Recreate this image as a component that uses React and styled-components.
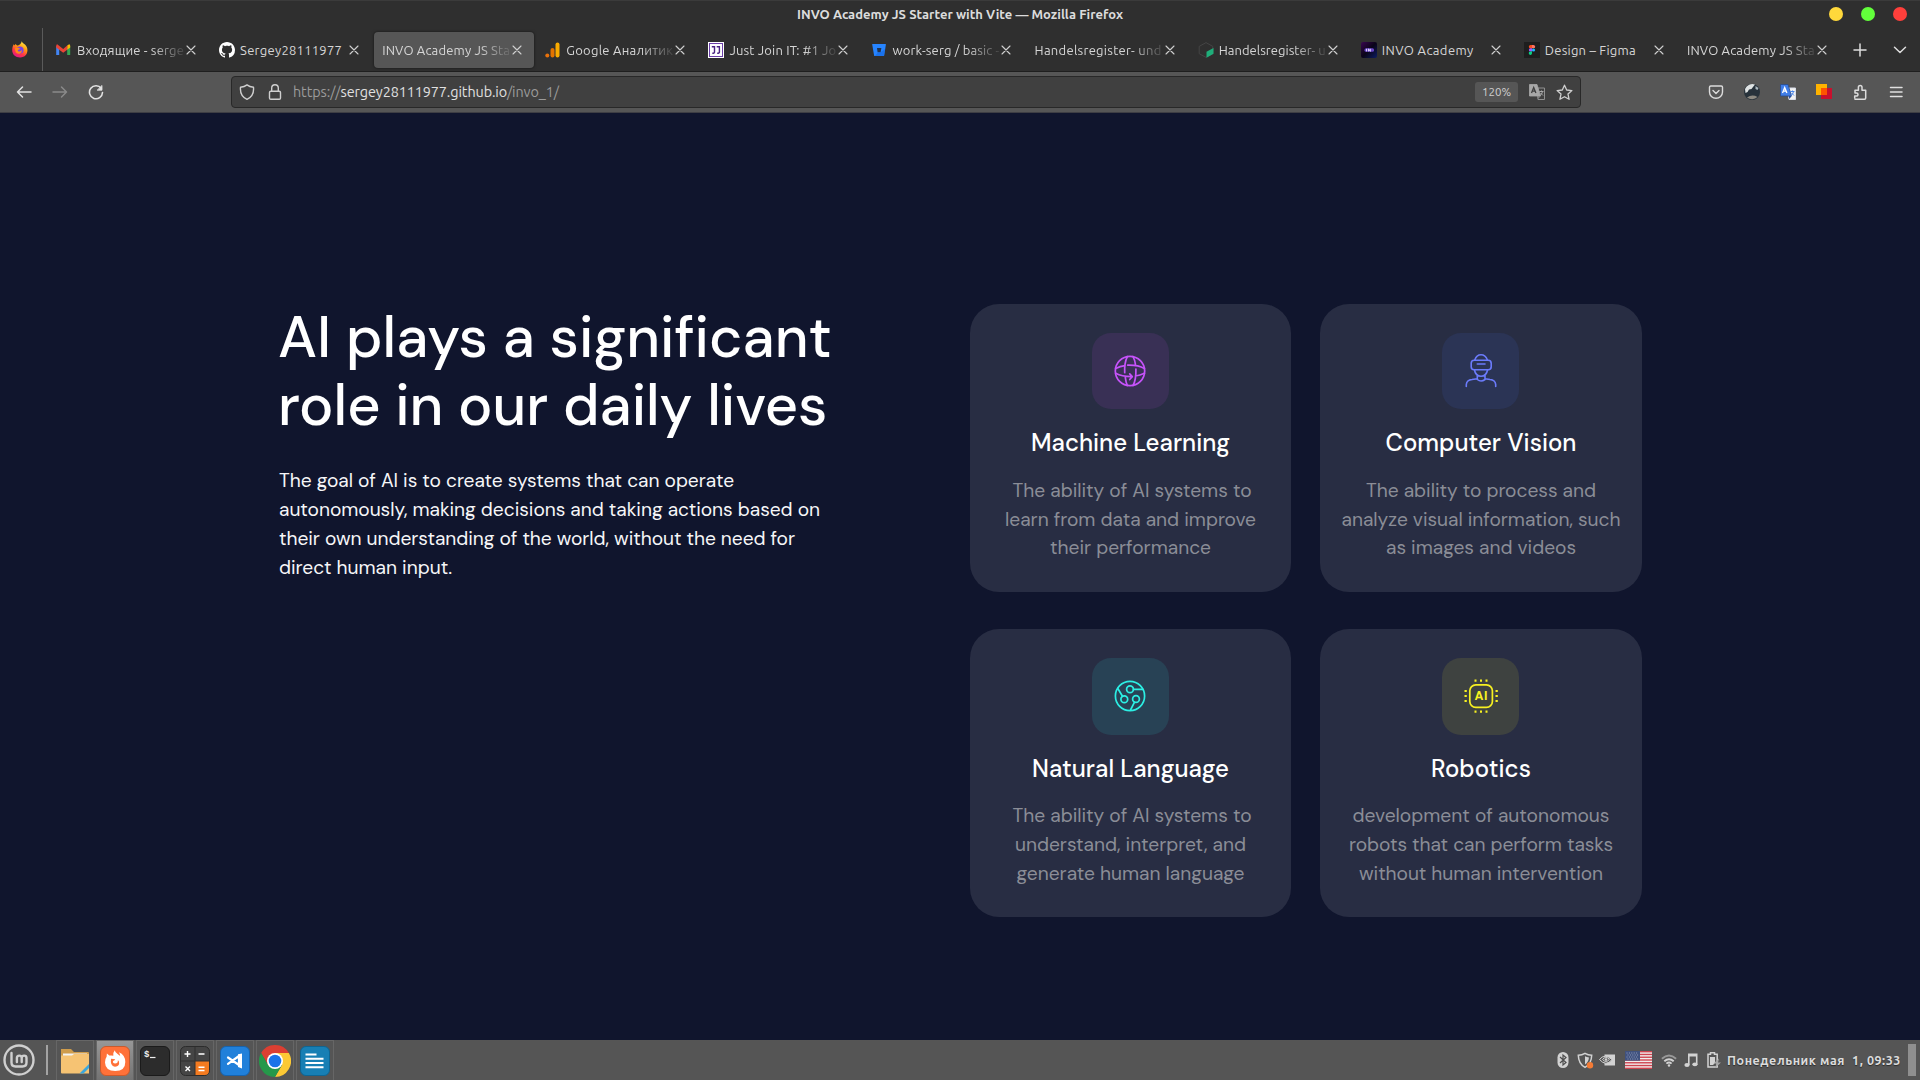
import React, { useLayoutEffect, useRef, useState } from "react";
import styled, { createGlobalStyle, css } from "styled-components";

const chromeFont = `Ubuntu, "Noto Sans", "Open Sans", sans-serif`;
const pageFont = `"DM Sans", Lato, "Open Sans", sans-serif`;

const GlobalStyle = createGlobalStyle`
  * { box-sizing: border-box; }
  body { margin: 0; background: #10152d; overflow: hidden; }
  svg { display: block; flex: none; }
`;

/* Text whose tracking is adjusted so that it spans a set measure */
const Measure = styled.span`
  display: inline-block;
  white-space: pre;
`;

function Fit({ width, children }) {
  const ref = useRef(null);
  const [spacing, setSpacing] = useState(0);
  useLayoutEffect(() => {
    const natural = ref.current.getBoundingClientRect().width;
    setSpacing((width - natural) / ref.current.textContent.length);
  }, [width]);
  return (
    <Measure ref={ref} style={{ letterSpacing: `${spacing}px` }}>
      {children}
    </Measure>
  );
}

const Desktop = styled.div`
  width: 1920px;
  height: 1080px;
  display: flex;
  flex-direction: column;
  background: #10152d;
`;

/* ---------- window title ---------- */
const TitleBar = styled.header`
  height: 28px;
  flex: none;
  background: #2f2f2f;
  border-top: 1px solid #3b3b3b;
  display: grid;
  grid-template-columns: 1fr auto 1fr;
  align-items: center;
  font: 600 13px/26px ${chromeFont};
  color: #dcdcdc;
`;
const WindowButtons = styled.div`
  grid-column: 3;
  display: flex;
  justify-content: flex-end;
  gap: 18px;
  padding: 0 13px 1px 0;
`;
const WindowTitle = styled.div`
  grid-column: 2;
  padding-bottom: 1px;
`;
const Dot = styled.i`
  width: 14px;
  height: 14px;
  border-radius: 50%;
  background: ${(p) => p.$color};
`;

/* ---------- tabs ---------- */
const TabStrip = styled.nav`
  height: 44px;
  flex: none;
  background: #2f2f2f;
  border-bottom: 1px solid #1f1f1f;
  display: flex;
  font: 400 13px/20px ${chromeFont};
  color: #d6d6d6;
`;
const PinnedTab = styled.div`
  width: 43px;
  margin-right: 5px;
  border-right: 1px solid #5a5a5a;
  display: flex;
  align-items: center;
  padding: 0 0 0 12px;
`;
const Tab = styled.div`
  width: 160px;
  height: 36px;
  margin: 4px 3.1px 0 0;
  padding: 0 11px 0 8px;
  border-radius: 4px;
  display: flex;
  align-items: center;
  ${(p) =>
    p.$active &&
    css`
      background: #565656;
      box-shadow: 0 0 3px rgba(0, 0, 0, 0.6);
    `}
`;
const TabIcon = styled.span`
  width: 16px;
  margin-right: 5px;
`;
const TabLabel = styled.span`
  flex: 1;
  min-width: 0;
  white-space: nowrap;
  ${(p) =>
    p.$fade &&
    css`
      mask-image: linear-gradient(to right, #000 calc(100% - 32px), rgba(0, 0, 0, 0.12));
    `}
`;
const TabClose = styled.span`
  width: 14px;
  margin-right: -1px;
`;
const TabTools = styled.div`
  display: flex;
  align-items: center;
  gap: 26px;
  padding: 0 0 0 11px;
`;

/* ---------- toolbar ---------- */
const Toolbar = styled.div`
  height: 41px;
  flex: none;
  background: #565656;
  border-bottom: 1px solid #3e3e44;
  display: flex;
  align-items: center;
  justify-content: space-between;
`;
const NavButtons = styled.div`
  display: flex;
  gap: 20px;
  padding-left: 16px;
  width: 231px;
`;
const UrlBar = styled.div`
  width: 1350px;
  height: 32px;
  background: #404040;
  border: 1px solid #282828;
  border-radius: 4px;
  display: flex;
  align-items: center;
  padding: 0 7px 0 7px;
`;
const UrlIcons = styled.div`
  display: flex;
  gap: 12px;
  margin-right: 10px;
`;
const Address = styled.div`
  flex: 1;
  font: 400 14.4px/22px ${chromeFont};
  color: #9b9b9b;
  b { font-weight: 400; color: #e0e0e0; }
`;
const ZoomBadge = styled.div`
  width: 43px;
  height: 20px;
  margin-right: 11px;
  border-radius: 3px;
  background: #565656;
  color: #d0d0d0;
  font: 400 11.5px/20px ${chromeFont};
  text-align: center;
`;
const StarSlot = styled.span`
  margin-left: 11px;
`;
const Extensions = styled.div`
  width: 339px;
  display: flex;
  justify-content: flex-end;
  gap: 20px;
  padding-right: 16px;
`;

/* ---------- page ---------- */
const Page = styled.main`
  flex: 1;
  display: flex;
  align-items: flex-start;
  gap: 99px;
  padding: 190.8px 0 0 279px;
  font-family: ${pageFont};
  font-optical-sizing: none;
`;
const Intro = styled.section`
  width: 592px;
  padding-top: 0.2px;
`;
const Heading = styled.h1`
  margin: 0 0 0 -1px;
  color: #fff;
  font-size: 57.6px;
  font-weight: 500;
  line-height: 68px;
`;
const Lead = styled.p`
  margin: 26px 0 0;
  color: #f6f6f8;
  font-size: 19.2px;
  line-height: 29px;
`;
const Cards = styled.section`
  display: grid;
  grid-template-columns: 321px 322px;
  gap: 37.2px 29px;
`;
const Card = styled.article`
  height: 288px;
  padding-top: 28.8px;
  border-radius: 29px;
  background: #282d43;
  display: flex;
  flex-direction: column;
  align-items: center;
  text-align: center;
`;
const IconTile = styled.div`
  width: 77px;
  height: 76.8px;
  margin-right: 1px;
  border-radius: 19px;
  background: ${(p) => p.$bg};
  color: ${(p) => p.$fg};
  display: flex;
  align-items: center;
  justify-content: center;
`;
const CardTitle = styled.h2`
  margin: 18px 0 0;
  color: #fff;
  font-size: 24px;
  font-weight: 500;
  line-height: 32px;
`;
const CardText = styled.p`
  margin: 17.4px 0 0;
  color: #8b8d97;
  font-size: 19.2px;
  line-height: 28.8px;
`;
const Line = styled.span`
  display: block;
  padding-left: ${(p) => p.$indent || 0}px;
`;

/* ---------- desktop panel ---------- */
const Panel = styled.footer`
  height: 40px;
  flex: none;
  background: #555;
  display: flex;
  align-items: center;
  padding: 0 4px 0 3px;
`;
const PanelDivider = styled.i`
  width: 2px;
  height: 30px;
  margin: 0 8px 0 11px;
  background: #a3a3a3;
`;
const Launcher = styled.div`
  width: 38px;
  height: 40px;
  margin-right: 2px;
  border: 1px solid #666;
  border-bottom: 0;
  display: flex;
  align-items: center;
  justify-content: center;
  background: ${(p) => (p.$active ? "linear-gradient(#979797, #737373)" : "transparent")};
`;
const Tray = styled.div`
  margin-left: auto;
  display: flex;
  align-items: center;
  color: #d2d2d2;
`;
const TraySlot = styled.span`
  width: ${(p) => p.$w}px;
  display: flex;
  justify-content: center;
`;
const Clock = styled.div`
  width: 183px;
  padding: 0 0 0 2px;
  font: 700 12.5px/20px ${chromeFont};
  color: #dcdcdc;
  text-shadow: 0 1px 1px rgba(0, 0, 0, 0.5);
`;
const ShowDesktop = styled.i`
  width: 8px;
  height: 32px;
  background: #8f8f8f;
`;

/* ---------- drawings ---------- */
const Svg = ({ s = 16, w, h, vb, children, sw = 1.4, ...rest }) => (
  <svg
    width={w || s}
    height={h || s}
    viewBox={vb || `0 0 ${w || s} ${h || s}`}
    fill="none"
    stroke="currentColor"
    strokeWidth={sw}
    strokeLinecap="round"
    strokeLinejoin="round"
    {...rest}
  >
    {children}
  </svg>
);

const Close = () => (
  <Svg s={14} sw={1.1} stroke="#d0d0d0"><path d="M3 3l8 8M11 3l-8 8" /></Svg>
);

const FirefoxIcon = () => (
  <svg width="16" height="17" viewBox="0 0 16 17">
    <defs>
      <linearGradient id="ff" x1="0.8" y1="0" x2="0.3" y2="1">
        <stop offset="0" stopColor="#fff44f" />
        <stop offset="0.4" stopColor="#ff980e" />
        <stop offset="0.7" stopColor="#ff3647" />
        <stop offset="1" stopColor="#e31587" />
      </linearGradient>
    </defs>
    <path d="M9.7.3C10.6 2.5 13 3 14.5 5.4c2.4 4.5.2 11-6.3 11C3.700 16.500.2 13.600.200 8.900c0-2 .7-4.400 1.500-5.700l1 1.300.700-1.500 1.800 1.500C6.800 4.400 8.900 3.700 9.700.3z" fill="url(#ff)" />
    <circle cx="8" cy="9" r="3.600" fill="#7542e5" />
    <path d="M3 7.300c2-1 4-.5 5.400.7-1.500.2-2.200.9-2.700 1.700 1.500 1.600 3.600.7 3.900-.9.700 1.500-.2 4-3 4S3 10 3 7.300z" fill="#ff8a16" />
  </svg>
);
const GmailIcon = () => (
  <svg width="16" height="16" viewBox="0.8 0 16 16">
    <path d="M1 4v9h3V6z" fill="#4285f4" />
    <path d="M15 4v9h-3V6z" fill="#34a853" />
    <path d="M12 3.500L14 2.300q1 .2 1 1.700v1.600l-3 2.200z" fill="#fbbc04" />
    <path d="M1 4q0-1.500 1-1.700L8 7l4-3.400v4.200l-4 3-7-5.200z" fill="#ea4335" />
  </svg>
);
const GithubIcon = () => (
  <svg width="16" height="16" viewBox="0 0 16 16">
    <path fill="#fff" d="M8 0C3.580 0 0 3.580 0 8c0 3.540 2.290 6.530 5.470 7.590.4.070.55-.17.55-.38 0-.19-.01-.82-.01-1.490-2.010.37-2.530-.49-2.690-.94-.09-.23-.48-.94-.82-1.130-.28-.15-.68-.52-.01-.53.63-.01 1.080.58 1.230.82.72 1.210 1.870.87 2.330.66.070-.52.28-.87.51-1.070-1.780-.2-3.640-.89-3.640-3.950 0-.87.31-1.590.82-2.150-.08-.2-.36-1.020.08-2.120 0 0 .67-.21 2.200.82.64-.18 1.320-.27 2-.27s1.360.09 2 .27c1.530-1.040 2.200-.82 2.200-.82.44 1.100.16 1.920.08 2.120.51.56.82 1.270.82 2.150 0 3.070-1.870 3.750-3.650 3.950.29.25.54.73.54 1.480 0 1.070-.01 1.930-.01 2.200 0 .21.15.46.55.38A8.010 8.010 0 0016 8c0-4.420-3.580-8-8-8z" />
  </svg>
);
const AnalyticsIcon = () => (
  <svg width="16" height="16" viewBox="0 0 16 16">
    <rect x="10.500" y="0.500" width="4" height="15" rx="2" fill="#f9ab00" />
    <rect x="5.500" y="6" width="4" height="9.500" rx="2" fill="#e37400" />
    <circle cx="2.300" cy="13.500" r="2" fill="#e8710a" />
  </svg>
);
const JoinIcon = () => (
  <svg width="16" height="16" viewBox="0 0 16 16">
    <rect width="16" height="16" fill="#fff" />
    <rect x="1.500" y="1.500" width="13" height="13" fill="#fff" stroke="#6b3fa8" />
    <path d="M3.800 4.700h2.700v5.300q0 1.300-2.200 1.300M8.700 4.700h2.700v5.300q0 1.300-2.200 1.300" fill="none" stroke="#4a2483" strokeWidth="1.400" />
  </svg>
);
const BitbucketIcon = () => (
  <svg width="16" height="16" viewBox="0 0 16 16">
    <path d="M1.500 2h13q.5 0 .4.500l-1.700 11q-.1.500-.6.500H3.700q-.5 0-.6-.5L1.200 2.500Q1.100 2 1.500 2z" fill="#2684ff" />
    <path d="M6 6h4.400l-.8 4.200H6.600z" fill="#20324e" />
    <path d="M10 10l4-3-1 6.500q-.1.500-.6.500H4l3-3.800z" fill="#1266e0" opacity=".6" />
  </svg>
);
const HexIcon = () => (
  <svg width="16" height="16" viewBox="0 0 16 16">
    <path d="M8 .6l6.800 3.800v7.300L8 15.400 1.200 11.700V4.400z" fill="none" stroke="#454545" />
    <path d="M8.500 9.700L15.500 6v5.800l-7 3.900z" fill="#1fae7a" />
  </svg>
);
const InvoIcon = () => (
  <svg width="16" height="16" viewBox="0 0 16 16">
    <defs>
      <linearGradient id="invo" x1="0" y1="0" x2="1" y2="1">
        <stop offset="0" stopColor="#3a0650" />
        <stop offset=".5" stopColor="#0a0418" />
        <stop offset="1" stopColor="#0c1c63" />
      </linearGradient>
    </defs>
    <rect width="16" height="16" rx="2" fill="url(#invo)" />
    <rect x="3.500" y="6.200" width="9.500" height="3.600" rx="1.500" fill="#6a47c8" />
    <path d="M5.500 6.800v2.600M7.500 9.400V6.800l1.800 2.600V6.800" stroke="#e6dcff" strokeWidth=".9" fill="none" />
  </svg>
);
const FigmaIcon = () => (
  <svg width="16" height="16" viewBox="0 0 16 16">
    <rect width="16" height="16" fill="#1e1e1e" />
    <path d="M8 3H6.500a1.600 1.600 0 000 3.300H8z" fill="#f24e1e" />
    <path d="M8 3h1.500a1.600 1.600 0 010 3.300H8z" fill="#ff7262" />
    <path d="M8 6.300H6.500a1.600 1.600 0 000 3.300H8z" fill="#a259ff" />
    <circle cx="9.500" cy="8" r="1.600" fill="#1abcfe" />
    <path d="M8 9.600H6.500A1.650 1.650 0 108 11.300z" fill="#0acf83" />
  </svg>
);

const GlobeIcon = () => (
  <Svg s={32} sw={1.7}>
    <circle cx="16" cy="16" r="14.700" />
    <path d="M1.700 13.500Q6 11.200 11 10.600M13.700 10.200Q24 9.900 30.400 13.500M1.700 18.300Q8 21.700 18 21.600M15.700 18.800l2.600 2.800-2.600 2.900M21.500 21Q26 20.300 30.400 18.300M13.300 1.600Q10.200 8 10.700 17.700M11.300 22.400Q12 28 13.300 30.500M19 1.600Q21 5 21.600 10.200M21.900 14Q22.200 25 19 30.500" />
  </Svg>
);
const VisionIcon = () => (
  <Svg w={32} h={34} vb="0 -1 32 34" sw={1.6}>
    <path d="M9.700 5.200Q11.500 -.2 16 -.2T22.500 5.200M12.300 9h7.700M9.500 15Q10.500 21 16 21.300 21.500 21 22.500 15M12.300 20.300v4.200Q16 27.500 20 24.500v-4.200M1.300 31.500V29.500Q1.700 25 7 24.500L12.300 23.800M30.700 31.500V29.500Q30.300 25 25 24.500L20 23.800" />
    <rect x="6.200" y="5.200" width="20" height="9.600" rx="3" />
  </Svg>
);
const LanguageIcon = () => (
  <Svg s={32} sw={1.7}>
    <circle cx="16" cy="16" r="14.600" />
    <circle cx="16" cy="9.300" r="3.400" />
    <circle cx="10.300" cy="19.300" r="3.400" />
    <circle cx="22" cy="19" r="3.400" />
    <path d="M19.500 9.300H29M8.500 16.300L3.800 8.500M20.500 22.200L16.500 30" />
  </Svg>
);
const ChipIcon = () => (
  <Svg s={34} sw={1.7} vb="-1 -1 34 34">
    <rect x="4.800" y="4.800" width="22.600" height="22.600" rx="6" />
    <g strokeWidth="2" strokeLinecap="butt">
      <path d="M10.500 -.5v2.300M16 -.5v2.300M21.500 -.5v2.300M10.500 30.500v2.300M16 30.500v2.300M21.500 30.500v2.300M-.5 11h2.300M-.5 16h2.300M-.5 21h2.300M30.500 11h2.300M30.500 16h2.300M30.500 21h2.300" />
    </g>
    <text x="16.400" y="20.400" textAnchor="middle" fontFamily="DM Sans, Lato, sans-serif" fontWeight="800" fontSize="12.500" fill="currentColor" stroke="none" letterSpacing=".8">AI</text>
  </Svg>
);

const TranslateIcon = ({ color }) => (
  <svg width="16" height="16" viewBox="0.500 0.500 16 16">
    <path d="M8 4.500h8v11.500H9.500z" fill={color ? "#f2f2f2" : "none"} stroke={color ? "#d8dde8" : "#8f8f8f"} />
    <path d="M1 1h7.500l3.500 11.500H1z" fill={color ? "#3f7de8" : "#a8a8a8"} stroke={color ? "#2a4b8c" : "#a8a8a8"} strokeWidth=".8" />
    <path d="M9 12.500h3L10 15.500z" fill={color ? "#274a9a" : "#858585"} />
    <path d="M3 9.500L5.200 4l2.200 5.500M3.800 7.700h2.800" fill="none" stroke={color ? "#fff" : "#404040"} strokeWidth="1.300" />
    <path d="M10.800 8h4.200M13 7v1M14 8q-.5 3-2.500 4M12 9.500l2.500 2.500" fill="none" stroke={color ? "#4a86ea" : "#a8a8a8"} />
  </svg>
);

const tabs = [
  { icon: <GmailIcon />, label: "Входящие - serge", width: 107, fade: true },
  { icon: <GithubIcon />, label: "Sergey28111977", width: 102 },
  { label: "INVO Academy JS Sta", width: 128, fade: true, active: true },
  { icon: <AnalyticsIcon />, label: "Google Аналитик", width: 107, fade: true },
  { icon: <JoinIcon />, label: "Just Join IT: #1 Jo", width: 107, fade: true },
  { icon: <BitbucketIcon />, label: "work-serg / basic -", width: 107, fade: true },
  { label: "Handelsregister- und", width: 127, fade: true },
  { icon: <HexIcon />, label: "Handelsregister- u", width: 107, fade: true },
  { icon: <InvoIcon />, label: "INVO Academy", width: 92 },
  { icon: <FigmaIcon />, label: "Design – Figma", width: 91 },
  { label: "INVO Academy JS Sta", width: 128, fade: true },
];

const cards = [
  {
    title: ["Machine Learning", 199], bg: "#393055", fg: "#c653fa", icon: <GlobeIcon />,
    lines: [["The ability of AI systems to", 239, 3], ["learn from data and improve", 251], ["their performance", 161]],
  },
  {
    title: ["Computer Vision", 191], bg: "#2b3455", fg: "#6b7bfb", icon: <VisionIcon />,
    lines: [["The ability to process and", 230], ["analyze visual information, such", 279], ["as images and videos", 190]],
  },
  {
    title: ["Natural Language", 197], bg: "#284255", fg: "#2cefe4", icon: <LanguageIcon />,
    lines: [["The ability of AI systems to", 239, 3], ["understand, interpret, and", 231], ["generate human language", 228]],
  },
  {
    title: ["Robotics", 100], bg: "#3e4240", fg: "#f7f121", icon: <ChipIcon />,
    lines: [["development of autonomous", 257], ["robots that can perform tasks", 264], ["without human intervention", 244]],
  },
];

/* ---------- launchers ---------- */
const MintLogo = () => (
  <Svg s={32} sw={2.4} stroke="#cfcfcf">
    <circle cx="16" cy="16" r="14.500" />
    <path d="M8.500 9v9.500q0 4 4 4h7q4 0 4-4V14q0-2.400-2.400-2.400T18.700 14v4M18.700 14q0-2.400-2.400-2.400T13.900 14v4" />
  </Svg>
);
const FolderIcon = () => (
  <svg width="30" height="30" viewBox="0 0 30 30">
    <path d="M1 3h10l3 3h14q1 0 1 1v19H1z" fill="#cf9c4c" />
    <path d="M3 7.500h24V12H3z" fill="#f3f3f3" />
    <path d="M1 9.500h11l2-1.500h15v19.500H2q-1 0-1-1z" fill="#f6c373" />
    <path d="M29 18v4l-5.500 5.500h-4z" fill="#3ba7dd" />
  </svg>
);
const FoxIcon = () => (
  <svg width="30" height="30" viewBox="0 0 30 30">
    <rect x=".5" y=".5" width="29" height="29" rx="5.500" fill="#ff7139" stroke="#c95a2d" />
    <path d="M14.800 4.200q.2 2.300 2.800 3.800l2.600 2q-.2-2-1.400-3.700 6.500 2.700 6.500 9.700 0 9-10 9T5 16.500q0-3.600 1.600-5.700L6.900 7.600l2.400 2q2.800-.5 4 .2Q12.700 6.800 14.800 4.200z" fill="#fff" />
    <path d="M11 12.700l4.200.6q-.3 1.300-2.100 1.600-.7 2.400 2 2.600 3 0 2.800-3.500 1.700 1.600 1.200 4-1 2.800-4.200 2.800-5 -.7-3.900-8.100z" fill="#ff7139" />
  </svg>
);
const TerminalIcon = () => (
  <svg width="30" height="30" viewBox="0 0 30 30">
    <rect x=".5" y=".5" width="29" height="29" rx="5.500" fill="#2c2c2c" stroke="#1b1b1b" />
    <text x="4" y="10.500" fontFamily="Liberation Mono, monospace" fontSize="9" fontWeight="700" fill="#eee">$</text>
    <path d="M10 11.500h5.500" stroke="#eee" strokeWidth="1.200" />
  </svg>
);
const CalcIcon = () => (
  <svg width="30" height="30" viewBox="0 0 30 30">
    <rect x=".5" y=".5" width="29" height="29" rx="5" fill="#454545" stroke="#2c2c2c" />
    <path d="M15 15h14v9.500q0 4.500-4.500 4.500H15z" fill="#f47b20" />
    <path d="M15 1v28M1 15h28" stroke="#303030" />
    <path d="M4.500 8h6M7.500 5v6M18.500 8h6M5.500 20.500l4.500 4.500M10 20.500L5.500 25M18.500 21.200h6M18.500 24.500h6" stroke="#fff" strokeWidth="1.400" />
  </svg>
);
const CodeIcon = () => (
  <svg width="30" height="30" viewBox="0 0 30 30">
    <rect x=".5" y=".5" width="29" height="29" rx="5.500" fill="#2080da" stroke="#1763ad" />
    <path d="M8 11.500L19 19V10L8 17.800" fill="none" stroke="#fff" strokeWidth="2.200" strokeLinejoin="round" strokeLinecap="round" />
    <path d="M18 8.200l4-.7v15l-4-1.500z" fill="#fff" />
  </svg>
);
const ChromeIcon = () => (
  <svg width="32" height="32" viewBox="0 0 32 32">
    <path d="M16 8h13.860A16 16 0 0116 32l6.900-12z" fill="#fcc934" />
    <path d="M2.140 8A16 16 0 0129.860 8H16l-6.900 12z" fill="#db3f32" />
    <path d="M2.140 8l6.960 12L22.900 20 16 32A16 16 0 012.140 8z" fill="#25984a" />
    <circle cx="16" cy="16" r="8" fill="#fff" />
    <circle cx="16" cy="16" r="6.300" fill="#1a73e8" />
  </svg>
);
const WriterIcon = () => (
  <svg width="30" height="30" viewBox="0 0 30 30">
    <rect x=".5" y=".5" width="29" height="29" rx="5.500" fill="#177fb4" stroke="#0f6592" />
    <path d="M5.500 8.500h11M5.500 12.700h18M5.500 17h18M5.500 21.300h18" stroke="#fff" strokeWidth="2" />
  </svg>
);

const launchers = [
  { id: "files", icon: <FolderIcon /> },
  { id: "firefox", icon: <FoxIcon />, active: true },
  { id: "terminal", icon: <TerminalIcon /> },
  { id: "calculator", icon: <CalcIcon /> },
  { id: "code", icon: <CodeIcon /> },
  { id: "chrome", icon: <ChromeIcon /> },
  { id: "writer", icon: <WriterIcon /> },
];

const FlagIcon = () => (
  <svg width="27" height="18" viewBox="0 0 27 18">
    <rect width="27" height="18" fill="#f0eded" />
    {[0, 1, 2, 3, 4, 5, 6].map((i) => (
      <rect key={i} y={i * 2.77} width="27" height="1.385" fill="#cf4450" />
    ))}
    <rect width="15" height="9.700" fill="#40527f" />
    <path d="M1.500 2h12M2.500 4h11M1.500 6h12M2.500 8h11" stroke="#a9b3cc" strokeWidth=".8" strokeDasharray="1 1.400" />
  </svg>
);

export default function App() {
  return (
    <Desktop>
      <GlobalStyle />
      <TitleBar>
        <WindowTitle><Fit width={326}>INVO Academy JS Starter with Vite — Mozilla Firefox</Fit></WindowTitle>
        <WindowButtons>
          <Dot $color="#ffd83b" />
          <Dot $color="#62ff3b" />
          <Dot $color="#ff3f3b" />
        </WindowButtons>
      </TitleBar>

      <TabStrip>
        <PinnedTab><FirefoxIcon /></PinnedTab>
        {tabs.map((t, i) => (
          <Tab key={i} $active={t.active}>
            {t.icon && <TabIcon>{t.icon}</TabIcon>}
            <TabLabel $fade={t.fade}><Fit width={t.width}>{t.label}</Fit></TabLabel>
            <TabClose><Close /></TabClose>
          </Tab>
        ))}
        <TabTools>
          <Svg s={14} sw={1.5} stroke="#dedede"><path d="M7 1v12M1 7h12" /></Svg>
          <Svg s={14} sw={1.5} stroke="#dedede"><path d="M1.500 4.300L7 9.500l5.500-5.200" /></Svg>
        </TabTools>
      </TabStrip>

      <Toolbar>
        <NavButtons>
          <Svg sw={1.5} stroke="#e2e2e2"><path d="M1.500 8h13.500M6.500 3l-5 5 5 5" /></Svg>
          <Svg sw={1.5} stroke="#8a8a8a"><path d="M1 8h13.500M9.500 3l5 5-5 5" /></Svg>
          <Svg sw={1.6} stroke="#e2e2e2"><path d="M13.300 4.500A6.500 6.500 0 1014.500 8.500" /><path d="M14 1.800v4.400H9.500z" fill="#e2e2e2" strokeWidth=".8" /></Svg>
        </NavButtons>
        <UrlBar>
          <UrlIcons>
            <Svg sw={1.4} stroke="#cfcfcf"><path d="M8 .9Q10.500 2.800 14.500 3.300 15.300 12 8 15.300.7 12 1.500 3.300 5.500 2.800 8 .9z" /></Svg>
            <Svg sw={1.4} stroke="#cfcfcf"><rect x="2.500" y="7.200" width="11" height="8" rx="1.300" /><path d="M4.700 7V4a3.300 3.300 0 016.600 0v3" /></Svg>
          </UrlIcons>
          <Address><Fit width={266}>https://<b>sergey28111977.github.io</b>/invo_1/</Fit></Address>
          <ZoomBadge>120%</ZoomBadge>
          <TranslateIcon />
          <StarSlot>
            <Svg s={17} sw={1.3} stroke="#cfcfcf"><path d="M8.500 1.200l2.200 4.800 5.200.6-3.900 3.500 1.100 5.200-4.600-2.600-4.600 2.600L5 10.100 1.100 6.600l5.200-.6z" /></Svg>
          </StarSlot>
        </UrlBar>
        <Extensions>
          <Svg sw={1.4} stroke="#dcdcdc"><path d="M2.800 2h10.400q1.300 0 1.300 1.300V8a6.500 6.300 0 01-13 0V3.300Q1.500 2 2.800 2zM5 6.500l3 2.900 3-2.900" /></Svg>
          <svg width="16" height="16" viewBox="0 0 16 16">
            <circle cx="8" cy="8" r="8" fill="#27323b" />
            <path d="M1 5a8 8 0 0110-4.500L9 3 7.500 5 5 5.500 3.500 8 1.500 9z" fill="#dfe3e3" />
            <path d="M11.500 2l3 2-1 2-2-1z" fill="#aeb9c0" />
            <path d="M3 13.500Q8 10 13.500 13A8 8 0 013 13.500z" fill="#8d8a82" />
          </svg>
          <TranslateIcon color />
          <svg width="16" height="16" viewBox="0 0 16 16">
            <rect width="11" height="11" fill="#ffb300" />
            <rect x="5" y="4" width="11" height="11" fill="#c8102e" />
            <rect x="5" y="4" width="6" height="7" fill="#ff5400" />
          </svg>
          <Svg sw={1.5} stroke="#dcdcdc"><path d="M3 15.200h9.500q1.200 0 1.200-1.200V6.300H10V3.200a1.800 1.800 0 00-3.600 0v3.100H3v2.600h1.400a1.500 1.500 0 010 3.200H2.700V14" /></Svg>
          <Svg sw={1.5} stroke="#e0e0e0"><path d="M2.500 3.500h11.500M2.500 8h11.500M2.500 12.500h11.500" /></Svg>
        </Extensions>
      </Toolbar>

      <Page>
        <Intro>
          <Heading>
            <Line><Fit width={552.5}>AI plays a significant</Fit></Line>
            <Line><Fit width={549.5}>role in our daily lives</Fit></Line>
          </Heading>
          <Lead>
            <Line><Fit width={455}>The goal of AI is to create systems that can operate</Fit></Line>
            <Line><Fit width={541}>autonomously, making decisions and taking actions based on</Fit></Line>
            <Line><Fit width={516}>their own understanding of the world, without the need for</Fit></Line>
            <Line><Fit width={173}>direct human input.</Fit></Line>
          </Lead>
        </Intro>
        <Cards>
          {cards.map((c) => (
            <Card key={c.title[0]}>
              <IconTile $bg={c.bg} $fg={c.fg}>{c.icon}</IconTile>
              <CardTitle><Fit width={c.title[1]}>{c.title[0]}</Fit></CardTitle>
              <CardText>
                {c.lines.map(([text, width, indent]) => (
                  <Line key={text} $indent={indent}><Fit width={width}>{text}</Fit></Line>
                ))}
              </CardText>
            </Card>
          ))}
        </Cards>
      </Page>

      <Panel>
        <MintLogo />
        <PanelDivider />
        {launchers.map((l) => (
          <Launcher key={l.id} $active={l.active}>{l.icon}</Launcher>
        ))}
        <Tray>
          <TraySlot $w={22}>
            <svg width="12" height="16" viewBox="0 0 12 16">
              <rect x=".5" width="11" height="16" rx="5.500" fill="#d2d2d2" />
              <path d="M3 5l6 5.500-3 2.500V3l3 2.500L3 11" fill="none" stroke="#4d4d4d" strokeWidth="1.200" />
            </svg>
          </TraySlot>
          <TraySlot $w={22}>
            <svg width="17" height="17" viewBox="0 0 17 17">
              <path d="M8 1.300q3 1.900 6.700 2Q14.500 12 8 15.300 1.500 12 1.300 3.300 5 3.200 8 1.300z" fill="none" stroke="#d2d2d2" strokeWidth="1.500" />
              <path d="M8 4.200q1.700 1 4 1.300Q11.500 10 8 12.500z" fill="#d2d2d2" />
              <circle cx="13" cy="13.300" r="3.200" fill="#f47b35" />
            </svg>
          </TraySlot>
          <TraySlot $w={21}>
            <svg width="16" height="12" viewBox="0 0 16 12">
              <path d="M5.500.5H16v11H5.500z" fill="#d2d2d2" />
              <path d="M.5 5.500Q5.500-1 13 5.500 7 13 .5 5.500z" fill="#555" stroke="#d2d2d2" />
              <path d="M3.500 5.500Q6.500 1.500 10.500 5.300 7 9.500 3.500 5.500z" fill="none" stroke="#d2d2d2" />
              <circle cx="7" cy="5.500" r="1.300" fill="#d2d2d2" />
            </svg>
          </TraySlot>
          <TraySlot $w={42}><FlagIcon /></TraySlot>
          <TraySlot $w={20}>
            <Svg w={16} h={13} sw={1.9} strokeLinecap="butt">
              <path d="M.9 4.800Q8-1.800 15.100 4.800" opacity=".55" />
              <path d="M3.300 7.300Q8 3 12.700 7.300M5.400 9.600Q8 7.300 10.600 9.600" />
              <circle cx="8" cy="11.500" r="1.200" fill="currentColor" stroke="none" />
            </Svg>
          </TraySlot>
          <TraySlot $w={24}>
            <svg width="14" height="14" viewBox="0 0 14 14">
              <path d="M4 .5h9.500v11h-1.600V3.500H5.600v8.500H4z" fill="#d2d2d2" />
              <ellipse cx="3" cy="12" rx="2.600" ry="1.900" fill="#d2d2d2" />
              <ellipse cx="10.900" cy="11.300" rx="2.600" ry="1.900" fill="#d2d2d2" />
            </svg>
          </TraySlot>
          <TraySlot $w={22}>
            <svg width="15" height="16" viewBox="0 0 15 16">
              <path d="M3.500 .7h4v1.500h2.700V15H1V2.200h2.500z" fill="none" stroke="#d2d2d2" strokeWidth="1.500" />
              <path d="M3 5h5v6l-2 2H3z" fill="#d2d2d2" />
              <path d="M12 6.500L6.500 11.500h3L8 16l6-5.500h-3z" fill="#a5a5a5" />
            </svg>
          </TraySlot>
          <Clock><Fit width={174}>Понедельник мая  1, 09:33</Fit></Clock>
          <ShowDesktop />
        </Tray>
      </Panel>
    </Desktop>
  );
}
